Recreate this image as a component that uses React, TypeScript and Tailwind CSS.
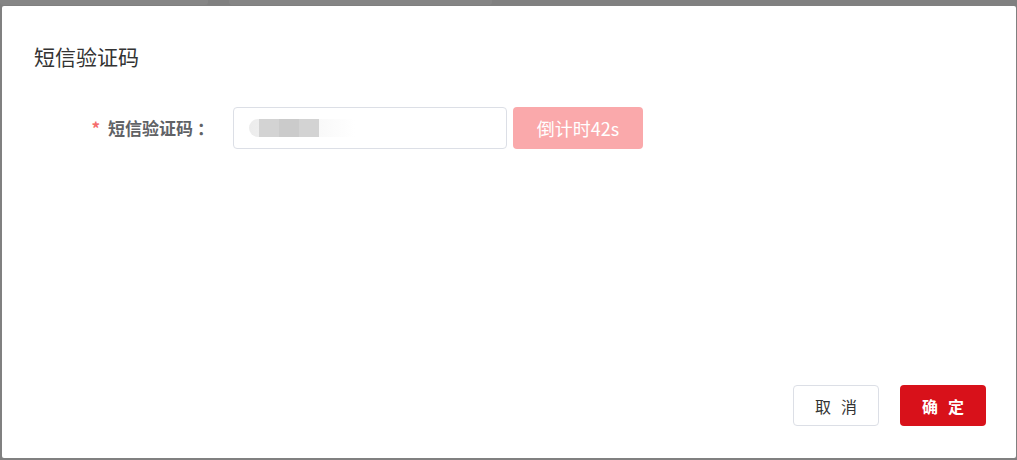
import React from 'react';

const font = '"Noto Sans CJK SC", "Liberation Sans", sans-serif';

// 后台页面被遮罩压暗后，在顶部露出的一点残影
function BackdropStrip() {
  return (
    <div className="flex h-[6px] items-start">
      <div className="h-[5px] w-[208px] rounded-b-[3px] bg-[#868686]" />
      <div className="ml-[21px] h-[5px] w-[263px] rounded-b-[3px] bg-[#858585]" />
    </div>
  );
}

// 验证码输入框里被打码的内容
function BlurredValue() {
  return (
    <div className="flex h-[18px] w-[106px] items-center rounded-l-full bg-gradient-to-r from-[#ececec] via-[#f6f6f6] to-transparent">
      <div className="ml-[10px] flex h-[18px]">
        <div className="w-[20px] bg-[#d3d3d3]" />
        <div className="w-[20px] bg-[#cbcbcb]" />
        <div className="w-[20px] bg-[#d3d3d3]" />
      </div>
    </div>
  );
}

export default function App() {
  return (
    <div className="flex h-[460px] w-[1017px] flex-col overflow-hidden bg-[#808080]" style={{ fontFamily: font }}>
      <BackdropStrip />
      <div className="ml-[2px] mr-[1px] flex h-[452px] flex-col rounded-[2px] bg-white">
        <div className="px-[32px] pt-[36px] text-[21px] leading-[28px] text-[#333333]">短信验证码</div>

        <div className="mt-[37px] flex items-center pl-[32px]">
          <div className="w-[199px] pr-[19px] text-right text-[17px] font-bold text-[#606266]">
            <span className="mr-[8px] text-[#f56c6c]">*</span>
            短信验证码<span className="ml-[4px]">：</span>
          </div>
          <div className="flex h-[42px] w-[274px] items-center rounded-[4px] border border-[#dcdfe6] bg-white px-[15px]">
            <BlurredValue />
          </div>
          <button
            type="button"
            className="ml-[6px] flex h-[42px] w-[130px] items-center justify-center rounded-[4px] bg-[#faa9ab] text-[18px] text-white"
          >
            倒计时42s
          </button>
        </div>

        <div className="flex-1" />

        <div className="flex justify-end gap-[21px] pb-[32px] pr-[30px]">
          <button
            type="button"
            className="flex h-[41px] w-[86px] items-center justify-center rounded-[4px] border border-[#dcdfe6] bg-white pl-[10px] text-[16px] tracking-[10px] text-[#333333]"
          >
            取消
          </button>
          <button
            type="button"
            className="flex h-[41px] w-[86px] items-center justify-center rounded-[4px] bg-[#d8111a] pl-[10px] text-[16px] font-bold tracking-[10px] text-white"
          >
            确定
          </button>
        </div>
      </div>
    </div>
  );
}
